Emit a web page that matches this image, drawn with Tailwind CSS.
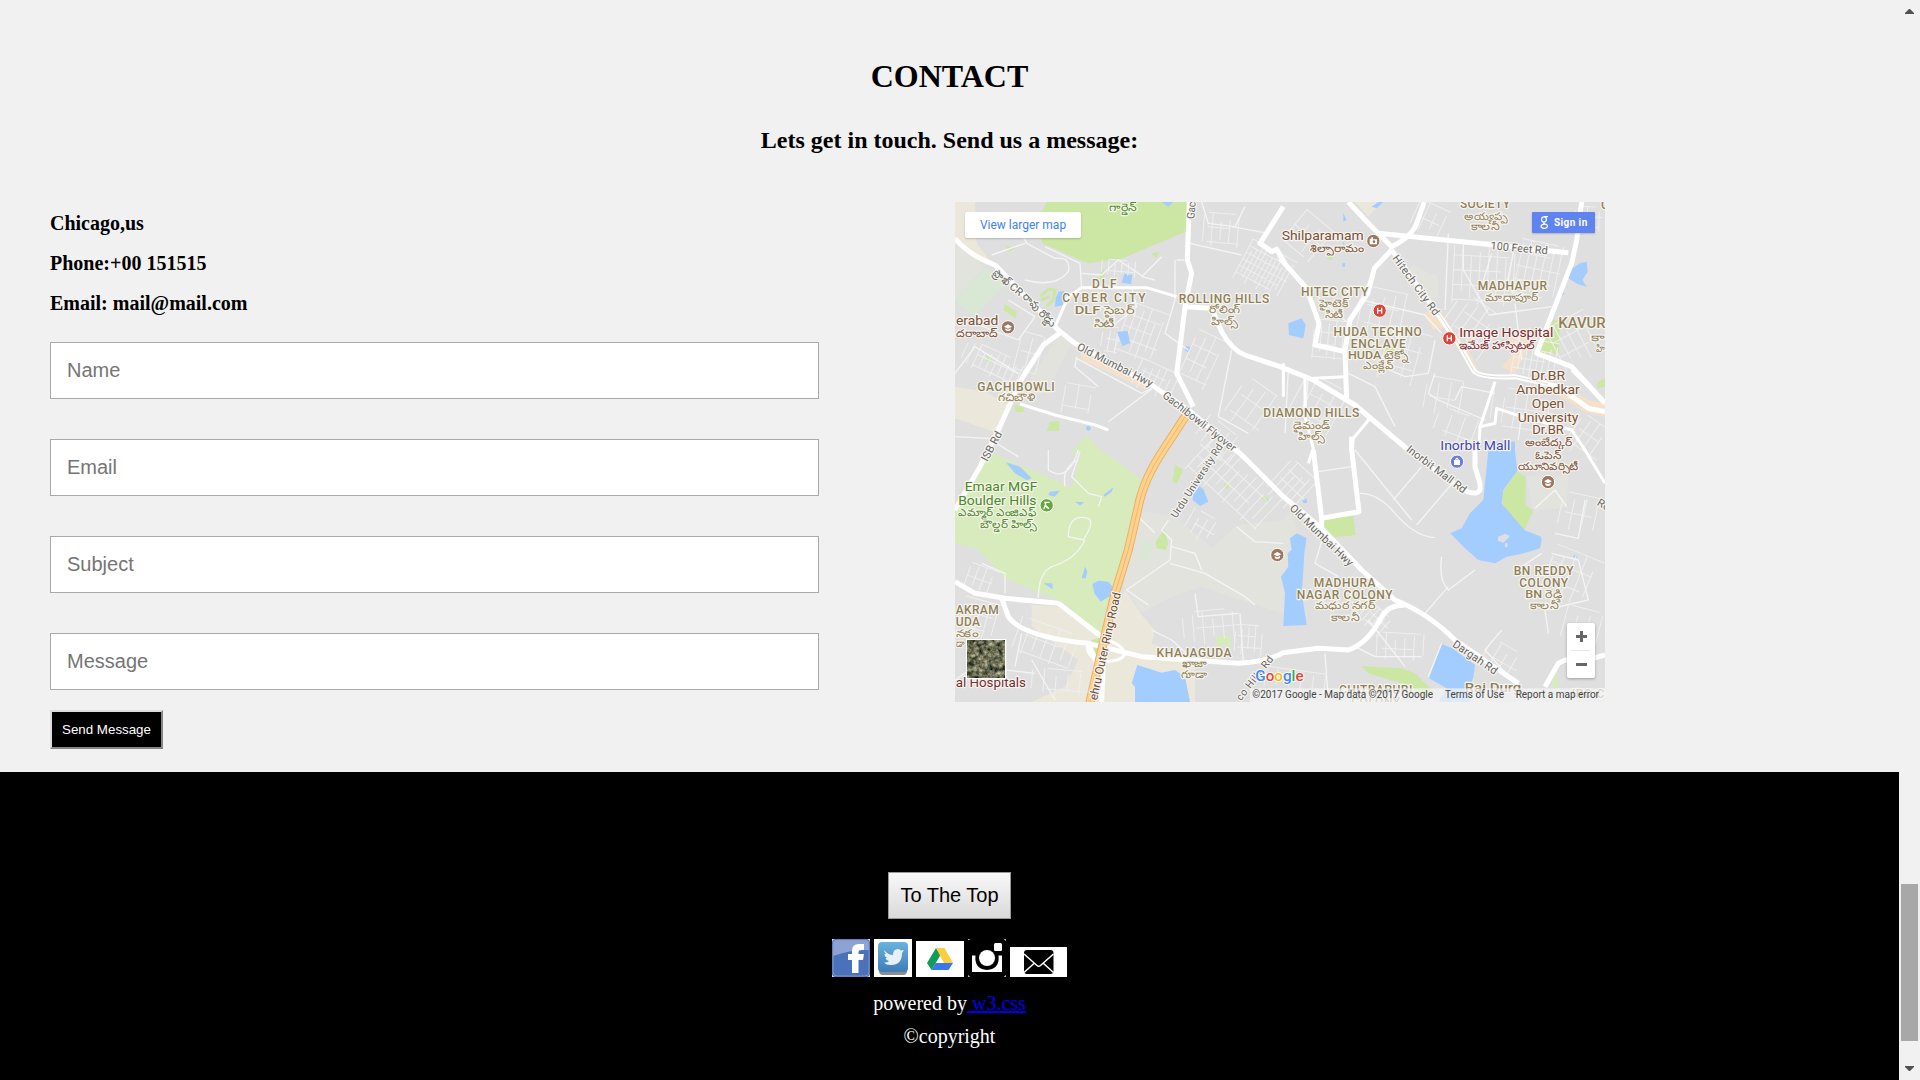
<!DOCTYPE html>
<html lang="en">
<head>
<meta charset="utf-8">
<title>Contact</title>
<script src="https://cdn.jsdelivr.net/npm/@tailwindcss/browser@4"></script>
</head>
<body class="flex h-[1080px] overflow-hidden bg-[#f1f1f1] text-black font-['Liberation_Serif',serif]">
<div class="flex w-[1899px] flex-col">
  <main class="h-[772px] px-[50px] pt-[54px]">
    <h2 class="text-center text-[32px] font-bold leading-[45px]">CONTACT</h2>
    <h3 class="mt-[23px] text-center text-[24px] font-bold leading-9">Lets get in touch. Send us a message:</h3>
    <div class="mt-11 flex">
      <section class="w-[905px]">
        <div class="pt-[7px] text-[20px] font-bold leading-7">
          <p class="mb-3">Chicago,us</p>
          <p class="mb-3">Phone:+00 151515</p>
          <p>Email: mail@mail.com</p>
        </div>
        <form class="mt-[25px] flex flex-col items-start font-['Liberation_Sans',sans-serif]">
          <input class="mb-10 h-[57px] w-[769px] border border-[#a9a9a9] bg-white px-4 text-[20px] placeholder:text-[#757575]" placeholder="Name">
          <input class="mb-10 h-[57px] w-[769px] border border-[#a9a9a9] bg-white px-4 text-[20px] placeholder:text-[#757575]" placeholder="Email">
          <input class="mb-10 h-[57px] w-[769px] border border-[#a9a9a9] bg-white px-4 text-[20px] placeholder:text-[#757575]" placeholder="Subject">
          <input class="mb-5 h-[57px] w-[769px] border border-[#a9a9a9] bg-white px-4 text-[20px] placeholder:text-[#757575]" placeholder="Message">
          <button type="button" class="h-[39px] w-[113px] whitespace-nowrap border-2 border-t-[#dcdcdc] border-l-[#dcdcdc] border-r-[#868686] border-b-[#868686] bg-black text-[13.33px] text-white">Send Message</button>
        </form>
      </section>
      <section class="relative h-[500px] w-[650px] overflow-hidden bg-[#dfdfdf]">
        <svg id="map" class="block" width="650" height="500" viewBox="0 6 1950 1500" font-family="Roboto, 'Noto Sans', sans-serif">
          <defs>
            <filter id="noise" x="0" y="0" width="1" height="1" color-interpolation-filters="sRGB"><feTurbulence type="fractalNoise" baseFrequency=".07" numOctaves="4" seed="4"/><feColorMatrix values=".9 .6 0 0 -.33  .9 .5 0 0 -.27  .8 .4 0 0 -.27  0 0 0 0 1"/></filter>
          </defs>
          <rect y="6" width="1950" height="1500" fill="#dfdfdf"/>
          <g fill="#ebe7db">
            <path d="M0 6H60L65 130L120 200L60 170L0 110Z"/><path d="M0 560L90 575L170 620L130 700L0 655Z"/><path d="M230 1215L310 1220L440 1310L510 1170L560 1245L600 1290L590 1330L700 1375L720 1400V1506H230L330 1460L370 1380L230 1280Z"/><path d="M1200 6H1280L1240 50Z"/>
          </g>
          <g fill="#e3e3de">
            <path d="M0 120L90 200L0 300Z"/><path d="M320 395L350 430L270 580L190 590Z"/><path d="M540 930L660 950L770 1045L850 975L985 960L1010 930L1030 1010L985 1240L740 1160L640 1195L560 1240L500 1150Z"/><path d="M1370 195L1450 230L1450 290L1400 300L1355 240Z"/><path d="M1715 830L1840 825L1835 925L1735 930Z"/>
          </g>
          <g fill="#d9e8d4"><path d="M90 205L160 240L60 350L0 300Z"/><path d="M565 1020L595 1030L580 1085L550 1075Z"/></g>
          <g fill="#d7ebbc">
            <path d="M395 703L430 745L450 760L360 760L350 755Z"/><path d="M100 755L350 862L380 755L455 760L560 840L540 920L480 1170L440 1303L310 1200L150 1135L100 1080L65 1045L0 1030V930L60 850Z"/>
            <path d="M780 1310L825 1305L828 1340L785 1338Z"/><path d="M1800 1410L1815 1465L1790 1460Z"/>
          </g>
          <g fill="#cce6a4">
            <path d="M275 6L245 60L262 130L400 190L500 176L692 95L700 6Z"/><path d="M150 312L185 335L182 355L145 330Z"/><path d="M150 135L180 145L160 155Z"/><path d="M445 205L450 240L428 240Z"/><path d="M590 160L612 155L605 176Z"/><path d="M178 618L208 612L205 636L182 636Z"/><path d="M285 665L313 662V692L275 692Z"/><path d="M95 468L113 475L108 487L95 482Z"/>
            <path d="M628 988L640 1030L632 1050L605 1045L602 1025Z"/><path d="M660 795L685 810L665 850L652 845Z"/><path d="M812 848L824 858L815 867L805 860Z"/><path d="M920 885L943 898L938 905L918 895Z"/>
            <path d="M1790 360L1815 362L1812 460L1750 462Z"/><path d="M1280 440L1310 430L1325 470L1295 500Z"/><path d="M1105 955L1195 947L1202 1005L1120 1015L1098 995Z"/><path d="M1685 813L1712 830L1712 915L1735 932L1708 990L1655 950L1642 905V880Z"/><path d="M1218 1398L1340 1405L1380 1420L1440 1480L1400 1500L1340 1450L1240 1420Z"/><path d="M1930 545L1950 535V560L1925 565Z"/><path d="M1060 290L1075 280L1078 310Z"/><path d="M1115 170L1135 165L1132 180L1118 178Z"/><path d="M410 1320L440 1312L430 1365L405 1350Z"/>
          </g>
          <path d="M255 290L280 268L300 270L295 300L275 318M258 300L285 290" fill="none" stroke="#cce6a4" stroke-width="9"/>
          <g fill="#a3ccff">
            <path d="M508 222L532 225L528 252L500 248Z"/><path d="M310 275L327 273L325 315L300 320L302 295Z"/><circle cx="698" cy="447" r="8"/><circle cx="400" cy="685" r="7"/><path d="M620 6H655L640 20Z"/>
            <path d="M152 787L195 800L230 835L215 840L180 820Z"/><path d="M285 875L315 872L298 890L280 885Z"/><path d="M445 885L475 862L470 875L450 890Z"/><path d="M360 905L388 907L375 916Z"/><path d="M412 1152L430 1142L460 1145L473 1160L470 1185L437 1205L418 1180Z"/><path d="M390 1100L397 1115L392 1135L380 1135Z"/><path d="M265 1150L292 1150L293 1168Z"/><path d="M715 865L730 856L745 868L760 905L735 918L713 900Z"/><path d="M547 1395L620 1418L660 1410L690 1430L705 1506H540V1460L530 1450Z"/>
            <path d="M1000 370L1040 355L1052 375L1045 415L1002 405Z"/><path d="M1165 40L1175 60L1165 65ZM1165 120L1172 150H1165ZM1162 190H1170V200H1162Z"/><path d="M1250 20L1270 6H1285L1265 25Z"/><path d="M1875 190L1895 185L1898 215L1882 240L1895 260L1868 252L1840 235L1845 210Z"/><path d="M1815 280L1829 278L1815 295Z"/>
            <path d="M1615 725H1680V752L1687 812L1645 870L1640 910L1708 990L1758 1010L1760 1020L1755 1045L1695 1063L1655 1070L1620 1090L1570 1080L1530 1045L1486 1000L1520 985L1545 940L1585 900L1600 750Z"/>
            <path d="M1025 1000L1055 1015L1048 1060L1045 1110L1040 1180L1055 1275L985 1278L990 1180L978 1130L1000 1100L998 1060L1010 1050L1005 1015Z"/><path d="M1460 1332L1492 1345L1560 1395L1555 1430L1545 1460V1506H1450L1475 1465L1422 1435Z"/><circle cx="1050" cy="903" r="7"/><path d="M1855 1065L1870 1070L1858 1075Z"/>
          </g>
          <g fill="#dfdfdf"><path d="M1630 1010L1650 1001L1665 1008L1645 1028L1628 1022ZM1650 1030L1658 1030V1042H1650Z"/></g>
          <g fill="#f5e1ca"><path d="M375 460L390 465L595 550L570 568L480 525L380 480Z"/><path d="M1405 340L1450 325L1480 370L1545 460L1570 510L1550 515L1470 380L1435 390Z"/><path d="M1690 390L1725 380L1740 400L1680 520L1640 500L1670 470L1660 410Z"/><path d="M1750 545L1830 560L1900 600L1950 612V650L1890 635L1800 580Z"/></g>
          <g id="grids" fill="none" stroke="#efefef" stroke-width="3"></g>
          <path d="M486 395L518 393L525 430L502 438Z" fill="#a3ccff"/>
          <g fill="none" stroke="#f4f4f4" stroke-width="4" stroke-linejoin="round">
            <path d="M180 60L215 130L300 175Q350 170 340 215Q300 265 210 240M210 130L110 165M160 300L240 350L190 420L60 370M0 520L60 440L190 520M380 265L375 190L270 140M380 220L440 225L490 180L565 230M530 260L545 320L470 380M620 170L560 230L600 240M660 180V300L630 400L700 450M665 180H700M705 130L860 165M740 6L760 70L840 80L870 20M830 80L940 100M830 450L790 650L880 700M430 560L360 500L365 470M365 475L560 580L590 565M460 665L590 568M0 710L100 715L190 770"/>
            <path d="M375 755L350 830L400 880L440 890L430 920M400 955Q340 940 340 1010L385 1020Q420 965 400 955M390 1020Q360 1080 290 1100Q250 1120 250 1195M330 860Q320 800 370 780M280 750V810Q340 850 370 750"/>
            <path d="M640 960L620 990L650 1020L645 1080L515 1170L580 1215M645 1090L750 1120L870 1190L900 1215M845 980L900 1025L985 1030M600 1000L550 950M650 1040L720 1060L740 1110M150 1180V1120L80 1090M0 1440L60 1400L240 1420M230 1380L300 1500M200 1300L180 1400M590 1290L650 1320L740 1400M720 1180L730 1250L850 1240M855 1240L865 1390"/>
            <path d="M1480 100L1470 330M1525 120V210L1600 340M1600 345L1790 320M1680 130L1660 240M1680 310L1700 480M1610 160L1580 260M1240 250L1180 370L1090 290M1220 300L1410 345L1460 400M1180 520L1260 560L1320 680M1280 500L1350 530L1420 520L1440 420M1440 520L1420 580L1450 600L1590 660M1500 600L1520 560L1620 580M1060 530L1050 650M1000 510L990 700M1700 640L1690 720"/>
            <path d="M1200 750L1370 960M1215 880Q1270 880 1320 940Q1380 1010 1440 1013M1315 900L1400 800M1385 975L1500 840M1090 815L1190 800M1460 1070Q1450 1140 1480 1170L1560 1110M1480 1160L1410 1240M1110 990L1080 1090L1150 1130M1240 1260L1350 1400M1200 1340L1260 1370H1400M1110 1360L1120 1500M1640 1290L1590 1350L1670 1440M1790 1060L1870 1080L1900 1200L1770 1230L1780 1300M1700 1100L1760 1060M1800 1000L1870 1015L1890 900M1740 925L1800 870L1835 920M1460 1330L1420 1430"/>
          </g>
          <g fill="none" stroke="#fff" stroke-width="9" stroke-linejoin="round">
            <path d="M195 612L300 645L420 675L460 690M380 263H575L665 290M300 380L340 290L380 263M1620 545L1575 680L1572 735M1575 680L1620 670L1625 625L1700 650L1850 690L1890 750L1950 850M1075 535L1170 530M1050 530V650L1075 745L1060 790M1245 655L1195 715L1190 750M1850 510L1950 610"/>
            <path d="M400 1330Q390 1350 410 1370L430 1382Q500 1390 510 1360Q500 1330 440 1315M985 490V590"/>
          </g>
          <g fill="none" stroke="#fff" stroke-width="15" stroke-linejoin="round">
            <path d="M0 115Q40 165 120 195L310 390L360 430L590 555L700 630L855 760L985 890L1100 985L1220 1110L1320 1200Q1420 1240 1500 1320L1690 1450"/>
            <path d="M320 395L265 435L195 545L130 690L75 800L0 930"/>
            <path d="M703 6L697 180L710 220L690 320L665 520L715 620M690 320L770 325L800 395Q830 450 870 465L975 500L1075 540L1200 615L1360 750L1520 868Q1590 900 1572 840L1560 800V740"/>
            <path d="M1180 6L1245 75L1310 140Q1370 110 1385 70L1408 6M1270 100L1840 158M1310 150L1258 205L1238 280L1185 360L1170 450L1175 605M975 175L1055 265L1092 370L1080 435L1170 455M985 20L915 130L950 155L965 148L990 190"/>
            <path d="M1310 150L1440 330L1510 430L1555 510Q1570 535 1680 530L1810 560L1900 625L1950 635M1880 6L1865 120L1850 190L1745 460L1850 500L1950 610"/>
            <path d="M1075 750L1100 955L1212 935L1190 750V710M1100 950V985"/>
            <path d="M0 1145L60 1180L150 1195L310 1210L440 1310M140 1195L160 1250Q200 1310 400 1330L560 1370L850 1390Q940 1385 985 1358L1090 1345L1180 1350Q1240 1330 1280 1250Q1300 1215 1350 1215M400 1330L425 1390L405 1506M445 1380L440 1506M1770 1460L1810 1390Q1840 1370 1880 1385L1950 1365"/>
          </g>
          <path d="M1440 325L1510 430L1555 510Q1570 535 1680 530L1780 552" fill="none" stroke="#ddd" stroke-width="3"/>
          <g fill="none" stroke-linejoin="round"><path d="M697 640L625 750Q565 840 550 920L520 1050L480 1180L440 1350L402 1520" stroke="#e9b069" stroke-width="27"/><path d="M697 640L625 750Q565 840 550 920L520 1050L480 1180L440 1350L402 1520" stroke="#ffd28c" stroke-width="21"/><path d="M697 640L625 750Q565 840 550 920L520 1050L480 1180L440 1350L402 1520" stroke="#eeb671" stroke-width="3"/></g>
          <g id="labels" stroke="#f7f5f0" stroke-width="7" stroke-linejoin="round" paint-order="stroke"></g>
          <g stroke="#fff" stroke-width="3">
            <g fill="#9c7860"><circle cx="159" cy="382" r="20"/><circle cx="1255" cy="123" r="20"/><circle cx="967" cy="1065" r="20"/><circle cx="1779" cy="846" r="20"/></g>
            <g fill="#db4437"><circle cx="1274" cy="332" r="20"/><circle cx="1483" cy="415" r="20"/></g>
            <circle cx="1506" cy="785" r="20" fill="#6c7ce0"/><circle cx="275" cy="916" r="20" fill="#63a63a"/>
          </g>
          <g fill="#fff">
            <path d="M147 380L159 373L171 380L159 386ZM151 385L159 389L167 385V390Q159 396 151 390ZM955 1063L967 1056L979 1063L967 1069ZM959 1068L967 1072L975 1068V1074Q967 1080 959 1074ZM1767 844L1779 837L1791 844L1779 850ZM1771 849L1779 853L1787 849V855Q1779 861 1771 855Z"/>
            <path d="M1244 116H1249V112H1254V118H1266V133H1244Z"/><circle cx="1257" cy="125" r="4" fill="#9c7860"/>
            <path d="M1497 780H1515V795H1497ZM1501 780V777Q1506 769 1511 777V780H1508Q1506 774 1504 780Z"/><path d="M267 905H284V909H274L273 915L284 925L280 928L271 921L268 928H264L270 913Z"/>
            <path d="M1266 323H1270V330H1278V323H1282V341H1278V334H1270V341H1266ZM1475 406H1479V413H1487V406H1491V424H1487V417H1479V424H1475Z"/>
          </g>
          <rect x="885" y="1465" width="1065" height="42" fill="#f5f5f5" opacity=".72"/>
          <g font-size="30" fill="#444">
            <text x="892" y="1494" textLength="542">©2017 Google - Map data ©2017 Google</text>
            <text x="1470" y="1494" textLength="177">Terms of Use</text>
            <text x="1682" y="1494" textLength="250">Report a map error</text>
          </g>
          <text x="901" y="1443" textLength="145" lengthAdjust="spacingAndGlyphs" font-size="46" font-weight="500" stroke="#fff" stroke-width="5" paint-order="stroke"><tspan fill="#4285f4">G</tspan><tspan fill="#ea4335">o</tspan><tspan fill="#fbbc05">o</tspan><tspan fill="#4285f4">g</tspan><tspan fill="#34a853">l</tspan><tspan fill="#ea4335">e</tspan></text>
          <rect x="33" y="1317" width="121" height="121" fill="#fff"/><rect x="37" y="1321" width="113" height="113" filter="url(#noise)"/>
        </svg>
        <div class="absolute left-[10px] top-[10px] flex h-[26px] w-[116px] items-center justify-center rounded-[2px] bg-white font-[Roboto,sans-serif] text-[12px] text-[#427fed] shadow-[0_1px_2px_rgba(0,0,0,0.2)]">View larger map</div>
        <div class="absolute left-[577px] top-[10px] flex h-[21px] w-[63px] items-center rounded-[1px] bg-[#5f83f0] pl-2 font-[Roboto,sans-serif] font-bold text-white shadow-[0_1px_2px_rgba(0,0,0,0.2)]">
          <svg class="mr-[5px]" width="9" height="13" viewBox="0 0 9 13" fill="none" stroke="#fff" stroke-width="1.2"><ellipse cx="4" cy="3.5" rx="2.4" ry="2.7"/><path d="M4 .7H8M4 6.2Q3 7.2 5 8Q8 9 7.300 10.800Q6.500 12.400 4 12.300Q1 12 1 10.200Q1.300 8.300 5 8.200"/></svg><span class="text-[10px] tracking-[0.4px]">Sign in</span></div>
        <div class="absolute left-[612px] top-[421px] h-[55px] w-[28px] rounded-[2px] bg-white shadow-[0_1px_3px_rgba(0,0,0,0.3)]">
          <svg width="28" height="55" viewBox="0 0 28 55"><path d="M9 13.500H20M14.500 8V19M9 41.500H20" stroke="#666" stroke-width="3"/><path d="M4 27.500H23" stroke="#e6e6e6"/></svg>
        </div>
      </section>
    </div>
  </main>
  <footer class="flex flex-1 flex-col items-center bg-black pt-[100px] text-white">
    <button type="button" class="h-[47px] w-[123px] border border-[#999] bg-linear-to-b from-[#f8f8f8] to-[#dadada] pb-[2px] font-['Liberation_Sans',sans-serif] text-[20px] text-black">To The Top</button>
    <div class="mt-5 flex h-[38px] items-end gap-1">
      <svg width="38" height="38" viewBox="0 0 38 38"><rect width="38" height="38" fill="#dfe6f4"/><rect width="38" height="38" rx="4" fill="#4a72b8"/><path d="M1 4Q1 1 4 1H34Q37 1 37 4V11Q20 10 1 17Z" fill="#8ea3d4"/><rect x="1" y="1" width="36" height="36" rx="4" fill="none" stroke="#7d96cc"/><path d="M20 34V21H16V15H20V12Q20 5 27 5H32V11H29Q26.500 11 26.500 13V15H32L31 21H26.500V34Z" fill="#fff"/></svg>
      <svg width="38" height="38" viewBox="0 0 38 38"><defs><linearGradient id="tw" x2="0" y2="1"><stop stop-color="#6ab3dc"/><stop offset="1" stop-color="#3f7cb8"/></linearGradient></defs><rect width="38" height="38" fill="#fff"/><rect x="5" y="6" width="28" height="30" rx="4" fill="#8d8d8d"/><rect x="4" y="3" width="30" height="30" rx="4" fill="url(#tw)"/><path d="M10 11Q14 16 19 16Q19 10 24 10Q26 10 27 11.500L30 11L28 14Q28 26 17 26Q12 26 10 23.500Q13 24 15 22Q12 21.500 11.500 19H13Q10 17 10.500 15H12Q10 13 10 11Z" fill="#e9f0f5"/></svg>
      <svg width="48" height="36" viewBox="0 0 48 36"><rect width="48" height="36" fill="#fff"/><path d="M20 7L11 22L15.500 29L24.500 14Z" fill="#0f9d58"/><path d="M20 7H28.500L37 22H28Z" fill="#ffcd40"/><path d="M19.500 22H37L32.500 29H15.500Z" fill="#3b78e7"/></svg>
      <svg width="38" height="38" viewBox="0 0 38 38"><rect width="38" height="38" fill="#000"/><path d="M0 1V0H2M36 0H38V2M0 36V38H2M38 36V38H36" stroke="#fff" fill="none"/><path d="M4 16.500H7.500Q6 30 19 31Q32 30 30.500 16.500H34V33H4Z" fill="#fff"/><circle cx="19" cy="19" r="8" fill="#fff"/><rect x="26" y="4" width="8" height="8" rx="1.500" fill="#fff"/></svg>
      <svg width="57" height="30" viewBox="0 0 57 30"><rect width="57" height="30" fill="#fff"/><rect x="14" y="3" width="29.500" height="24" rx="3" fill="#000"/><path d="M14 7L27 18.500Q28.700 20 30.500 18.500L43.500 7M14 25.500L24.500 16M43.500 25.500L33 16" fill="none" stroke="#fff" stroke-width="1.500"/></svg>
    </div>
    <p class="mt-[11px] text-[20px] leading-[30px]">powered by<a class="text-[#0000ee] underline" href="#"> w3.css</a></p>
    <p class="mt-[3px] text-[20px] leading-[30px]">©copyright</p>
  </footer>
</div>
<aside class="flex w-[21px] flex-col items-center bg-[#f1f1f1] pr-px">
  <svg class="mt-[9px]" width="9" height="5" viewBox="0 0 9 5"><path d="M0 5V4L4 0H5L9 4V5Z" fill="#505050"/></svg>
  <div class="mt-[870px] h-[157px] w-[17px] bg-[#a8a8a8]"></div>
  <svg class="mt-[25px]" width="9" height="5" viewBox="0 0 9 5"><path d="M0 0V1L4 5H5L9 1V0Z" fill="#505050"/></svg>
</aside>
<script>
const NS = 'http://www.w3.org/2000/svg';
// Neighbourhood street grids: centre x, centre y, width, height, rotation, spacing
const grids = [
  [930,210,150,130,28,13],[800,90,110,100,5,26],[110,490,180,80,25,20],[560,400,120,160,20,22],[600,540,120,90,25,20],[490,205,100,50,5,20],
  [740,480,90,160,25,28],[890,620,120,140,35,34],[790,720,130,90,38,26],[370,600,90,90,10,40],[220,470,70,140,15,34],[470,420,60,80,10,22],
  [840,850,280,140,43,25],[1010,860,110,130,43,20],[770,1280,170,100,-5,30],[70,1260,110,120,15,26],[270,1330,180,110,20,30],[330,1450,200,80,5,36],
  [80,1140,90,80,20,24],[880,1320,80,90,4,20],[740,980,90,80,30,25],
  [1590,220,190,190,3,26],[1740,210,150,170,12,24],[1550,380,160,150,35,30],[1740,480,130,120,10,18],[1430,60,110,90,25,30],[1900,60,80,80,3,18],
  [1120,420,90,120,5,22],[1290,340,150,140,12,32],[1090,620,150,160,28,34],[1350,470,130,160,15,34],[1470,590,120,110,10,36],[1700,630,180,120,8,34],
  [1860,420,130,140,-28,28],[1900,720,110,120,35,28],[1500,680,120,90,20,40],[1060,110,110,120,40,34],
  [1340,1340,150,80,3,28],[1260,1260,90,70,42,16],[1850,1130,150,150,22,32],[1880,1280,110,110,15,36],[1640,1380,110,90,30,30],[1020,1440,180,60,8,36],[1880,940,130,110,12,36]
];
const gg = document.getElementById('grids');
grids.forEach(([cx,cy,w,h,a,s],k) => {
  let d='';
  for (let i=0,x=-w/2;x<=w/2;x+=s,i++) d+=`M${x} ${-h/2+((i*7+k)%4)*h/12}V${h/2-((i*5+k)%3)*h/10}`;
  for (let j=0,y=-h/2;y<=h/2;y+=s*1.7,j++) d+=`M${-w/2+((j*3+k)%3)*w/9} ${y}H${w/2-((j+k)%3)*w/8}`;
  const p=document.createElementNS(NS,'path');
  p.setAttribute('d',d); p.setAttribute('transform',`translate(${cx} ${cy}) rotate(${a})`); gg.append(p);
});
// Labels: x, baseline y, width (0 = natural), text, size, colour, anchor, rotation
const A='#8f7f58',B='#7a5037',R='#7a2b33',G='#4a8a22',S='#666',m='middle',s='start',e='end';
const labels = [
  [448,265,74,'DLF',36,A,m],[447,305,250,'CYBER CITY',36,A,m],[450,343,182,'DLF సైబర్',34,A,m],[447,380,62,'సిటీ',32,A,m],
  [807,308,272,'ROLLING HILLS',36,A,m],[808,340,95,'రోలింగ్',32,A,m],[808,376,80,'హిల్స్',32,A,m],
  [183,572,232,'GACHIBOWLI',36,A,m],[185,604,112,'గచిబౌళి',32,A,m],[502,32,80,'గార్డెన్',32,G,m],
  [3,376,127,'erabad',38,B,s],[2,412,128,'దరాబాద్',32,B,s],
  [1103,119,246,'Shilparamam',38,B,m],[1145,156,160,'శిల్పారామం',32,B,m],
  [1139,288,202,'HITEC CITY',36,A,m],[1137,320,88,'హైటెక్',32,A,m],[1137,353,55,'సిటీ',32,A,m],
  [1268,407,265,'HUDA TECHNO',36,A,m],[1270,443,165,'ENCLAVE',36,A,m],[1270,477,182,'HUDA టెక్నో',34,A,m],[1270,508,92,'ఎంక్లేవ్',32,A,m],
  [1069,651,288,'DIAMOND HILLS',36,A,m],[1069,687,110,'డైమండ్',32,A,m],[1069,719,78,'హిల్స్',32,A,m],
  [1590,24,150,'SOCIETY',36,A,m],[1592,60,130,'అయ్యప్ప',32,A,m],[1590,90,85,'కాలనీ',32,A,m],
  [1672,270,208,'MADHAPUR',36,A,m],[1670,303,158,'మాదాపూర్',32,A,m],
  [1810,384,142,'KAVUR',42,A,s],[1908,424,40,'కా',32,A,s],[1922,457,26,'హి',32,A,s],[1938,28,0,'C',36,A,s],
  [1513,412,282,'Image Hospital',39,R,s],[1513,448,228,'ఇమేజ్ హాస్పిటల్',32,R,s],
  [1779,539,102,'Dr.BR',40,B,m],[1779,581,190,'Ambedkar',40,B,m],[1779,623,97,'Open',40,B,m],[1779,665,182,'University',40,B,m],[1779,701,95,'Dr.BR',37,B,m],[1779,737,140,'అంబేద్కర్',32,B,m],[1779,776,78,'ఓపెన్',32,B,m],[1779,809,180,'యూనివర్సిటీ',32,B,m],
  [1456,749,210,'Inorbit Mall',39,'#3c46b4',s],
  [138,872,218,'Emaar MGF',39,G,m],[127,914,235,'Boulder Hills',39,G,m],[127,949,238,'ఎమ్మార్ ఎంజిఎఫ్',32,G,m],[160,985,168,'బౌల్డర్ హిల్స్',32,G,m],
  [2,1242,129,'AKRAM',36,A,s],[2,1278,73,'UDA',36,A,s],[2,1310,68,'నకం',32,A,s],[2,1342,26,'డా',32,A,s],
  [2,1460,211,'al Hospitals',38,R,s],
  [717,1370,225,'KHAJAGUDA',36,A,m],[717,1400,75,'ఖాజా',32,A,m],[717,1433,80,'గూడా',32,A,m],
  [1169,1160,185,'MADHURA',36,A,m],[1169,1196,288,'NAGAR COLONY',36,A,m],[1169,1228,180,'మధుర నగర్',32,A,m],[1169,1262,85,'కాలనీ',32,A,m],
  [1766,1124,180,'BN REDDY',36,A,m],[1766,1160,147,'COLONY',36,A,m],[1766,1194,110,'BN రెడ్డి',34,A,m],[1766,1227,85,'కాలనీ',32,A,m],
  [1262,1482,220,'CHITRAPURI',36,A,m],[1262,1517,147,'COLONY',36,A,m],[1614,1475,170,'Rai Durg',40,A,m],[1840,1494,108,'JRC C',36,A,s],
  [718,58,52,'Gac',32,S,s,-86],[112,222,105,'ప్రొఖ్ CR',32,S,s,40],[200,290,130,'రావు రోడ్డు',32,S,s,46],
  [364,448,250,'Old Mumbai Hwy',33,S,s,27],[620,590,270,'Gachibowli Flyover',33,S,s,38],[97,786,96,'ISB Rd',33,S,s,-62],
  [664,956,258,'Urdu University Rd',31,S,s,-57],[1606,148,172,'100 Feet Rd',33,S,s,5],[1311,175,215,'Hitech City Rd',33,S,s,54],
  [1352,752,215,'Inorbit Mall Rd',33,S,s,37],[1002,927,250,'Old Mumbai Hwy',33,S,s,44],[1490,1338,155,'Dargah Rd',33,S,s,34],[1924,914,0,'Ro',33,S,s,30],
  [426,1502,330,'ehru Outer Ring Road',35,'#6b4a32',s,-77.5],[858,1504,160,'co Hills Rd',31,S,s,-52]
];
const lg = document.getElementById('labels');
labels.forEach(([x,y,w,t,size,c,anchor,rot]) => {
  const n=document.createElementNS(NS,'text');
  n.textContent=t;
  n.setAttribute('font-size',size); n.setAttribute('fill',c); n.setAttribute('text-anchor',anchor);
  if (c===A) n.setAttribute('font-weight','500');
  n.setAttribute('transform',`translate(${x} ${y}) rotate(${rot||0})`);
  if (w) { n.setAttribute('textLength',w); n.setAttribute('lengthAdjust',/[^\x00-\x7f]/.test(t)||size>36?'spacingAndGlyphs':'spacing'); }
  lg.append(n);
});
</script>
</body>
</html>
